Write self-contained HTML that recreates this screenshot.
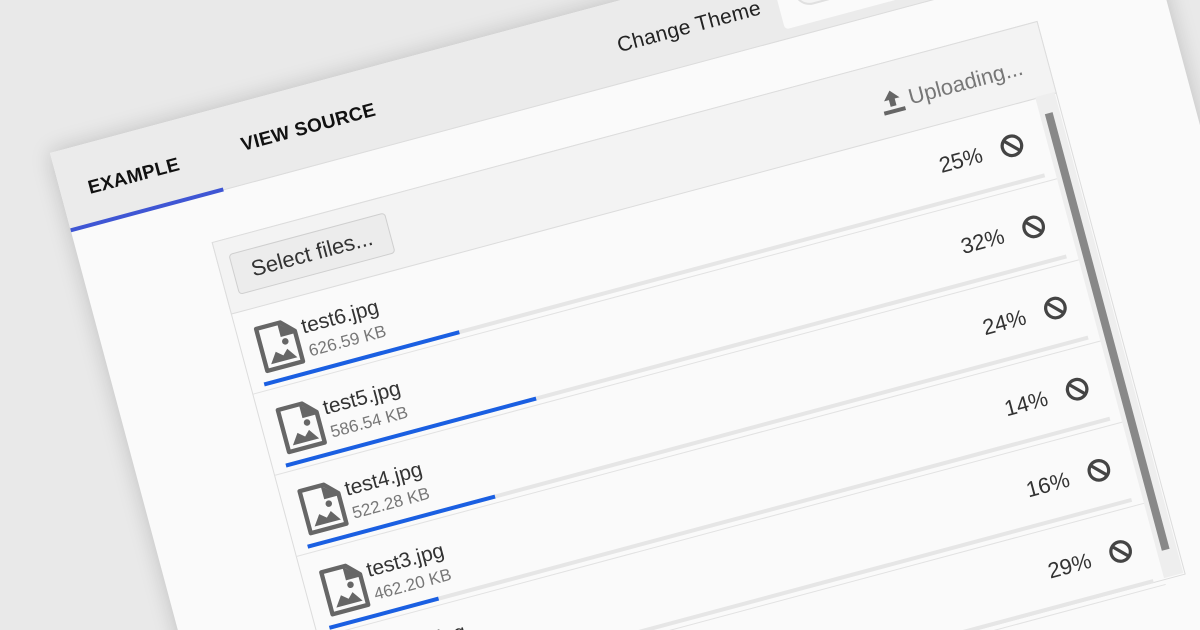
<!DOCTYPE html>
<html><head><meta charset="utf-8"><style>
html,body{margin:0;padding:0;width:1200px;height:630px;overflow:hidden;background:#e9e9e9;font-family:"Liberation Sans",sans-serif}
#wrap{position:absolute;left:0;top:0;width:1200px;height:630px;overflow:hidden}
#card{position:absolute;left:50px;top:153px;width:1118px;height:1000px;transform-origin:0 0;transform:rotate(-15deg);background:#fafafa;box-shadow:0 0 22px rgba(0,0,0,0.18)}
.a{position:absolute;white-space:nowrap;line-height:1}
#hdr{position:absolute;left:0;top:0;width:1118px;height:80px;background:#ebebeb;border-bottom:1px solid #dcdcdc}
.tab{font-size:19px;font-weight:bold;color:#111;letter-spacing:0.3px}
#box{position:absolute;left:133px;top:128px;width:853px;height:571px;border:1px solid #dcdcdc;background:#fafafa;overflow:hidden}
#bh{position:absolute;left:133px;top:128px;width:853px;height:73px;background:#f3f3f3;border:1px solid #dcdcdc}
.row{position:absolute;left:134px;width:832px;height:84px;border-bottom:1px solid #e2e2e2}
.fn{font-size:21px;color:#333}
.sz{font-size:17px;color:#777}
.pc{font-size:22px;color:#333;text-align:right;width:70px}
.trk{position:absolute;left:147px;width:808px;height:4px;background:#e6e6e6}
.trk i{position:absolute;left:0;top:0;height:4px;background:#1a5fe2}
</style></head><body>
<div id="wrap">
<div id="card">
  <div id="hdr"></div>
  <div class="a" style="left:0;top:78px;width:158px;height:4px;background:#3f56d4"></div>
  <div class="a tab" style="left:28px;top:35px">EXAMPLE</div>
  <div class="a tab" style="left:187px;top:33px">VIEW SOURCE</div>
  <div class="a" style="left:576px;top:33px;font-size:21px;color:#222;letter-spacing:0.3px">Change Theme</div>
  <div class="a" style="left:742px;top:-20px;width:240px;height:91px;background:#fafafa;border-radius:0 0 4px 4px"></div>
  <div class="a" style="left:760px;top:20px;width:60px;height:30px;border:2px solid #e0e0e0;border-radius:16px;background:#f4f4f4"></div>

  <div id="box"></div>
  <div id="bh"></div>
  <div class="a" style="left:146px;top:144px;width:160px;height:40px;background:#ececec;border:1px solid #cfcfcf;border-radius:4px;font-size:22px;color:#333;line-height:40px;text-align:center">Select files...</div>
  <svg class="a" style="left:814px;top:153px" width="26" height="28" viewBox="0 0 26 28"><path d="M13 4 L5 13 H10 V20 H16 V13 H21 Z" fill="#666"/><rect x="2" y="23" width="22" height="4" fill="#666"/></svg>
  <div class="a" style="left:844px;top:158px;font-size:22px;color:#777">Uploading...</div>

  <div class="a" style="left:966px;top:201px;width:20px;height:498px;background:#eeeeee"></div>
  <div class="a" style="left:971px;top:220px;width:8px;height:452px;background:#888"></div>

  <div class="row" style="top:201px"></div>
  <div class="row" style="top:285px"></div>
  <div class="row" style="top:369px"></div>
  <div class="row" style="top:453px"></div>
  <div class="row" style="top:537px"></div>
  <div class="row" style="top:621px"></div>
  <div id="rows"></div>
</div>
</div>
<script>
var data=[["test6.jpg","626.59 KB",25],["test5.jpg","586.54 KB",32],["test4.jpg","522.28 KB",24],["test3.jpg","462.20 KB",14],["test2.jpg","401.12 KB",16],["test1.jpg","355.80 KB",29]];
var h="";
data.forEach(function(d,k){var o=84*k;
h+='<svg class="a" style="left:150px;top:'+(220+o)+'px" width="44" height="50" viewBox="0 0 40 46"><path d="M3 3 H26 L37 14 V43 H3 Z" fill="none" stroke="#666" stroke-width="4" stroke-linejoin="round"/><path d="M23 3 V16 H37" fill="#666"/><path d="M8 38 L15 28 L21 33 L26 28 L33 38 Z" fill="#666"/><circle cx="26" cy="21" r="3" fill="#666"/></svg>';
h+='<div class="a fn" style="left:198px;top:'+(223+o)+'px">'+d[0]+'</div>';
h+='<div class="a sz" style="left:199px;top:'+(250+o)+'px">'+d[1]+'</div>';
h+='<div class="trk" style="top:'+(277+o)+'px"><i style="width:'+(8.08*d[2])+'px"></i></div>';
h+='<div class="a pc" style="left:830px;top:'+(232+o)+'px">'+d[2]+'%</div>';
h+='<svg class="a" style="left:918px;top:'+(229+o)+'px" width="26" height="26" viewBox="0 0 24 24"><circle cx="12" cy="12" r="9" fill="none" stroke="#444" stroke-width="3"/><path d="M6 6 L18 18" stroke="#444" stroke-width="3"/></svg>';
});
document.getElementById("rows").outerHTML=h;
</script>
</body></html>
